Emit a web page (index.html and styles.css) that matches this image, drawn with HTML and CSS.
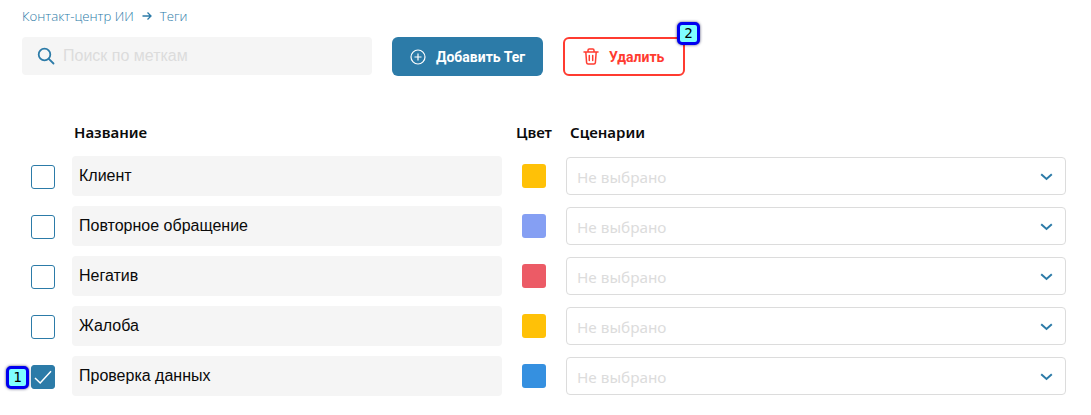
FILE: index.html
```html
<!DOCTYPE html>
<html lang="ru">
<head>
<meta charset="utf-8">
<title>Теги</title>
<link rel="stylesheet" href="styles.css">
</head>
<body>
<div class="page">
  <nav class="crumbs"><span>Контакт-центр ИИ</span>
    <svg class="crumb-arrow" width="10" height="10" viewBox="0 0 10 10"><path d="M0.5 5H9M5.5 1.5L9 5L5.5 8.5" fill="none" stroke="#2c7ba8" stroke-width="1.3"/></svg>
    <span>Теги</span></nav>
  <div class="toolbar">
    <div class="search">
      <svg width="18" height="18" viewBox="0 0 18 18"><circle cx="7.5" cy="7.5" r="5.8" fill="none" stroke="#2c7ba8" stroke-width="1.8"/><path d="M11.8 11.8L16.5 16.5" stroke="#2c7ba8" stroke-width="1.8" stroke-linecap="round"/></svg>
      <span class="search-ph">Поиск по меткам</span>
    </div>
    <button class="btn btn-add">
      <svg width="16" height="16" viewBox="0 0 16 16"><circle cx="8" cy="8" r="7" fill="none" stroke="#fff" stroke-width="1.2"/><path d="M8 4.5V11.5M4.5 8H11.5" stroke="#fff" stroke-width="1.2"/></svg>
      Добавить Тег
    </button>
    <div class="del-wrap">
      <button class="btn btn-del">
        <svg width="16" height="17" viewBox="0 0 16 17"><path d="M1 4H15M5 4V2.2C5 1.5 5.5 1 6.2 1H9.8C10.5 1 11 1.5 11 2.2V4M2.8 4L3.6 14.6C3.7 15.4 4.3 16 5.1 16H10.9C11.7 16 12.3 15.4 12.4 14.6L13.2 4M6.3 7.5V12.5M9.7 7.5V12.5" fill="none" stroke="#ff3b30" stroke-width="1.5" stroke-linecap="round" stroke-linejoin="round"/></svg>
        Удалить
      </button>
      <span class="badge badge-2">2</span>
    </div>
  </div>
  <div class="table-head">
    <span class="th th-name">Название</span>
    <span class="th th-color">Цвет</span>
    <span class="th">Сценарии</span>
  </div>
  <div class="row">
    <span class="check"></span>
    <div class="name">Клиент</div>
    <span class="swatch c-yellow"></span>
    <div class="select"><span>Не выбрано</span><svg width="13" height="8" viewBox="0 0 13 8"><path d="M1.2 1.2L6.5 6L11.8 1.2" fill="none" stroke="#2c7ba8" stroke-width="2"/></svg></div>
  </div>
  <div class="row">
    <span class="check"></span>
    <div class="name">Повторное обращение</div>
    <span class="swatch c-blue"></span>
    <div class="select"><span>Не выбрано</span><svg width="13" height="8" viewBox="0 0 13 8"><path d="M1.2 1.2L6.5 6L11.8 1.2" fill="none" stroke="#2c7ba8" stroke-width="2"/></svg></div>
  </div>
  <div class="row">
    <span class="check"></span>
    <div class="name">Негатив</div>
    <span class="swatch c-red"></span>
    <div class="select"><span>Не выбрано</span><svg width="13" height="8" viewBox="0 0 13 8"><path d="M1.2 1.2L6.5 6L11.8 1.2" fill="none" stroke="#2c7ba8" stroke-width="2"/></svg></div>
  </div>
  <div class="row">
    <span class="check"></span>
    <div class="name">Жалоба</div>
    <span class="swatch c-yellow"></span>
    <div class="select"><span>Не выбрано</span><svg width="13" height="8" viewBox="0 0 13 8"><path d="M1.2 1.2L6.5 6L11.8 1.2" fill="none" stroke="#2c7ba8" stroke-width="2"/></svg></div>
  </div>
  <div class="row">
    <span class="check checked">
      <svg width="18" height="15" viewBox="0 0 18 15"><path d="M1 8L6.2 13L17 1.2" fill="none" stroke="#fff" stroke-width="1.5"/></svg>
      <span class="badge badge-1">1</span>
    </span>
    <div class="name">Проверка данных</div>
    <span class="swatch c-sky"></span>
    <div class="select"><span>Не выбрано</span><svg width="13" height="8" viewBox="0 0 13 8"><path d="M1.2 1.2L6.5 6L11.8 1.2" fill="none" stroke="#2c7ba8" stroke-width="2"/></svg></div>
  </div>
</div>
</body>
</html>
```
FILE: styles.css
```css
* { box-sizing: border-box; }
html, body { margin: 0; height: 100%; }
body { background: #fff; overflow: hidden; }
.page { padding: 8px 0 0 22px; width: 1091px; }
.crumbs {
  display: flex; align-items: center; height: 16px;
  font: 300 13.2px/16px "Open Sans", sans-serif;
  color: #2c7ba8;
}
.crumb-arrow { margin: 0 8px; }
.toolbar { display: flex; align-items: flex-start; margin-top: 13px; height: 39px; }
.search {
  width: 350px; height: 38px; background: #f5f5f5; border-radius: 4px;
  display: flex; align-items: center; padding-left: 15px;
}
.search-ph { font: 16px "Liberation Sans", sans-serif; color: #dcdcdc; margin-left: 8px; }
.btn {
  height: 39px; border-radius: 6px; display: flex; align-items: center;
  font: 700 14px "Roboto", sans-serif; padding: 0; cursor: pointer;
}
.btn-add {
  width: 151px; margin-left: 20px; background: #2c7ba8; color: #fff; border: 0;
  padding-left: 18px; gap: 10px;
}
.del-wrap { position: relative; margin-left: 20px; }
.btn-del {
  width: 122px; background: #fff; color: #ff3b30; border: 2px solid #ff3b30;
  padding-left: 18px; gap: 10px;
}
.badge {
  position: absolute; width: 23px; height: 23px;
  background: #7fffff; border: 3px solid #0000f0; border-radius: 5px;
  box-shadow: 0 0 3px rgba(0,0,60,.7);
  font: 400 14px/17px "DejaVu Sans Mono", monospace; color: #000; text-align: center;
}
.badge-2 { top: -15px; right: -15px; }
.badge-1 { top: 0; left: -26px; }
.table-head {
  display: flex; align-items: center; height: 20px; margin-top: 46px;
  font: 600 15px/20px "Noto Sans", sans-serif; color: #0b0b0b;
}
.th-name { margin-left: 52px; width: 442px; }
.th-color { width: 54px; }
.row { display: flex; align-items: center; height: 40px; margin-top: 10px; padding-left: 9px; }
.table-head + .row { margin-top: 14px; }
.check {
  position: relative; flex: none; width: 24px; height: 24px;
  border: 1px solid #2c7ba8; border-radius: 3px; background: #fff;
  margin-top: 2px; display: flex; align-items: center; justify-content: center;
}
.check.checked { background: #2c7ba8; }
.name {
  width: 430px; height: 40px; margin-left: 17px; background: #f5f5f5; border-radius: 4px;
  padding-left: 7px; font: 16px/40px "Liberation Sans", sans-serif; color: #0a0a0a;
}
.swatch { flex: none; width: 24px; height: 24px; border-radius: 3px; margin-left: 20px; }
.c-yellow { background: #ffc107; }
.c-blue { background: #859ff3; }
.c-red { background: #ec5b66; }
.c-sky { background: #3590e0; }
.select {
  width: 500px; height: 38px; margin-left: 20px; background: #fff;
  border: 1px solid #dcdcdc; border-radius: 4px;
  display: flex; align-items: center; justify-content: space-between;
  padding: 1px 12px 0 10px;
  font: 15.3px "Noto Sans", sans-serif; color: #dcdcdc;
}
```
